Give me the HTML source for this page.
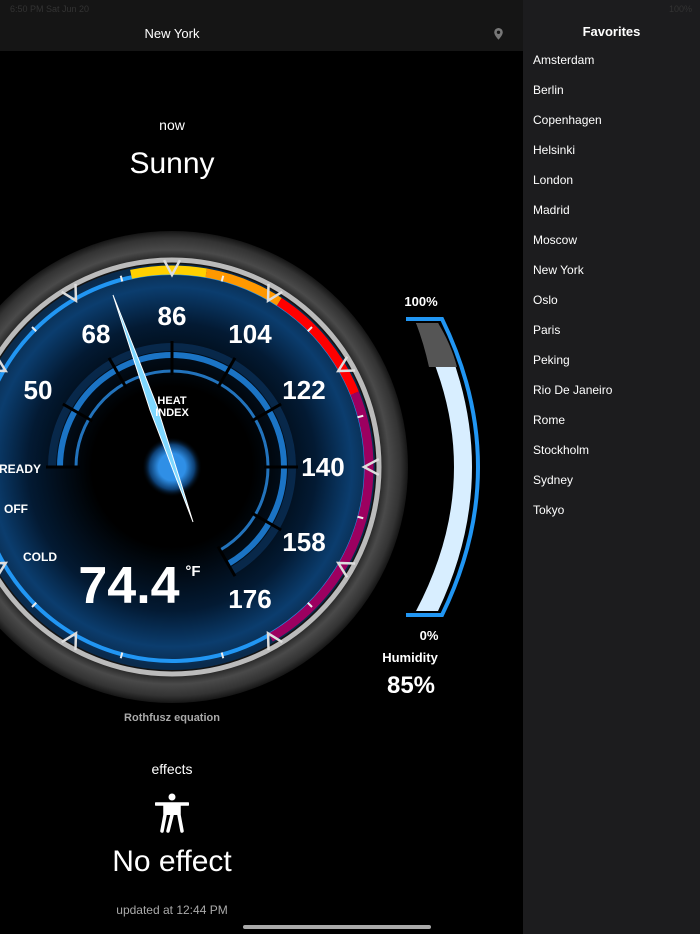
<!DOCTYPE html>
<html><head><meta charset="utf-8"><style>
body{margin:0;width:700px;height:934px;background:#000;font-family:"Liberation Sans",sans-serif;overflow:hidden;position:relative;color:#fff}
.hdr{position:absolute;left:0;top:0;width:523px;height:51px;background:#151515}
.side{position:absolute;left:523px;top:0;width:177px;height:934px;background:#1c1c1e}
.side .t{position:absolute;top:24px;width:177px;text-align:center;font-size:13px;font-weight:bold}
.side .i{position:absolute;left:10px;font-size:12px}
.c{position:absolute;text-align:center;width:344px;left:0}
</style></head><body>
<div class="hdr"></div>
<div style="position:absolute;left:10px;top:4px;font-size:9px;color:#333">6:50 PM  Sat Jun 20</div>
<div class="c" style="top:26px;font-size:13px">New York</div>
<svg style="position:absolute;left:493px;top:27px" width="11" height="14"><path d="M5.5 1a4.3 4.3 0 0 0-4.3 4.3c0 3 4.3 7.5 4.3 7.5s4.3-4.5 4.3-7.5A4.3 4.3 0 0 0 5.5 1z" fill="#777"/><circle cx="5.5" cy="5.3" r="1.7" fill="#151515"/></svg>
<div class="side"><div class="t">Favorites</div>
<div style="position:absolute;right:8px;top:4px;font-size:9px;color:#333">100%</div>
<div class="i" style="top:53px">Amsterdam</div><div class="i" style="top:83px">Berlin</div><div class="i" style="top:113px">Copenhagen</div><div class="i" style="top:143px">Helsinki</div><div class="i" style="top:173px">London</div><div class="i" style="top:203px">Madrid</div><div class="i" style="top:233px">Moscow</div><div class="i" style="top:263px">New York</div><div class="i" style="top:293px">Oslo</div><div class="i" style="top:323px">Paris</div><div class="i" style="top:353px">Peking</div><div class="i" style="top:383px">Rio De Janeiro</div><div class="i" style="top:413px">Rome</div><div class="i" style="top:443px">Stockholm</div><div class="i" style="top:473px">Sydney</div><div class="i" style="top:503px">Tokyo</div>
</div>
<div class="c" style="top:117px;font-size:14px">now</div>
<div class="c" style="top:147px;font-size:30px">Sunny</div>
<svg id="g" style="position:absolute;left:0;top:0" width="523" height="934">
<defs>
<radialGradient id="ring" cx="172" cy="467" r="236" gradientUnits="userSpaceOnUse"><stop offset="0.86" stop-color="#111"/><stop offset="0.92" stop-color="#4a4a4a"/><stop offset="0.97" stop-color="#333"/><stop offset="1" stop-color="#151515"/></radialGradient>
<radialGradient id="face" cx="172" cy="467" r="200" gradientUnits="userSpaceOnUse"><stop offset="0.4" stop-color="#000"/><stop offset="0.72" stop-color="#031a33"/><stop offset="0.9" stop-color="#0b3d6e"/><stop offset="1" stop-color="#0a2b4d"/></radialGradient>
<radialGradient id="hub" cx="172" cy="467" r="30" gradientUnits="userSpaceOnUse"><stop offset="0.45" stop-color="#2f8fe6"/><stop offset="0.75" stop-color="#0d3f73"/><stop offset="1" stop-color="#000" stop-opacity="0"/></radialGradient>
</defs>
<circle cx="172" cy="467" r="236" fill="url(#ring)"/>
<circle cx="172" cy="467" r="207" fill="none" stroke="#bbb" stroke-width="5"/>
<circle cx="172" cy="467" r="203" fill="url(#face)"/>
<g id="dyn"></g>
<circle cx="172" cy="467" r="30" fill="url(#hub)"/>
<path d="M113 295 L157 406 L193 522 L150 410 Z" fill="#7fd8ff" stroke="#fff" stroke-width="1"/>
<g font-family="Liberation Sans" font-weight="bold" fill="#fff" text-anchor="middle">
<text x="96" y="343" font-size="26">68</text><text x="172" y="325" font-size="26">86</text><text x="250" y="343" font-size="26">104</text>
<text x="38" y="399" font-size="26">50</text><text x="304" y="399" font-size="26">122</text><text x="323" y="476" font-size="26">140</text>
<text x="304" y="551" font-size="26">158</text><text x="250" y="608" font-size="26">176</text>
<text x="172" y="404" font-size="11">HEAT</text><text x="172" y="416" font-size="11">INDEX</text>
<text x="20" y="473" font-size="12">READY</text><text x="16" y="513" font-size="12">OFF</text><text x="40" y="561" font-size="12">COLD</text>
<text x="129" y="603" font-size="52">74.4</text><text x="193" y="576" font-size="15">°F</text>
<text x="172" y="721" font-size="11" fill="#aaa">Rothfusz equation</text>
<text x="421" y="306" font-size="13">100%</text><text x="429" y="640" font-size="13">0%</text>
<text x="410" y="662" font-size="13">Humidity</text><text x="411" y="693" font-size="24">85%</text>
</g>
<path d="M406 319 L442 319 Q514 467 442 615 L406 615" fill="none" stroke="#2196f3" stroke-width="4"/>
<path d="M416 323 L438 323 Q506 467 438 611 L416 611 Q492 467 416 323Z" fill="#d8eeff"/>
<path d="M416 323 L438 323 Q451 344 457 367 L429 367 Q424 344 416 323Z" fill="#555"/>
</svg>
<div class="c" style="top:761px;font-size:14px">effects</div>
<svg style="position:absolute;left:155px;top:793px" width="34" height="40"><circle cx="17" cy="4" r="3.5" fill="#fff"/><path d="M1 11 H33 M10 11 H24 V22 L27 38 M17 22 L13 38 M10 11 V22 L7 38 M24 22" stroke="#fff" stroke-width="3.5" fill="none" stroke-linecap="round"/><path d="M11 12 h12 v10 h-12z" fill="#fff"/></svg>
<div class="c" style="top:845px;font-size:30px">No effect</div>
<div class="c" style="top:903px;font-size:12px;color:#aaa">updated at 12:44 PM</div>
<div style="position:absolute;left:243px;top:925px;width:188px;height:4px;border-radius:2px;background:#aaa"></div>
<script>
const ns="http://www.w3.org/2000/svg",g=document.getElementById("dyn"),cx=172,cy=467;
function P(a,r){a=a*Math.PI/180;return[cx+r*Math.sin(a),cy-r*Math.cos(a)]}
function arc(a1,a2,r,col,w,op){const p1=P(a1,r),p2=P(a2,r);const e=document.createElementNS(ns,"path");e.setAttribute("d",`M${p1} A${r} ${r} 0 ${a2-a1>180?1:0} 1 ${p2}`);e.setAttribute("fill","none");e.setAttribute("stroke",col);e.setAttribute("stroke-width",w);if(op)e.setAttribute("opacity",op);g.appendChild(e)}
function line(a,r1,r2,col,w){const p1=P(a,r1),p2=P(a,r2);const e=document.createElementNS(ns,"line");e.setAttribute("x1",p1[0]);e.setAttribute("y1",p1[1]);e.setAttribute("x2",p2[0]);e.setAttribute("y2",p2[1]);e.setAttribute("stroke",col);e.setAttribute("stroke-width",w);g.appendChild(e)}
arc(150,359.9+150-0.1,194,"#2196f3",4);
arc(-12,10,197,"#ffd000",9);arc(10,33,197,"#ff9800",9);arc(33,68,197,"#f00",9);arc(68,150,197,"#9c0060",9);
arc(-90,150,112,"#1e7fd8",6,0.9);arc(-90,150,96,"#2a8ee8",3,0.8);arc(-90,150,120,"#0d3f73",8,0.5);
for(let a=-90;a<=150;a+=30)line(a,92,126,"#000",3);
for(let a=-150;a<=150;a+=30){const p=P(a,192),q1=P(a-2.2,207),q2=P(a+2.2,207);const e=document.createElementNS(ns,"path");e.setAttribute("d",`M${q1} L${p} L${q2}`);e.setAttribute("stroke","#ddd");e.setAttribute("stroke-width","2.5");e.setAttribute("fill","none");g.appendChild(e)}
for(let a=-165;a<=165;a+=30)line(a,192,198,"#eee",2);
</script>
</body></html>
